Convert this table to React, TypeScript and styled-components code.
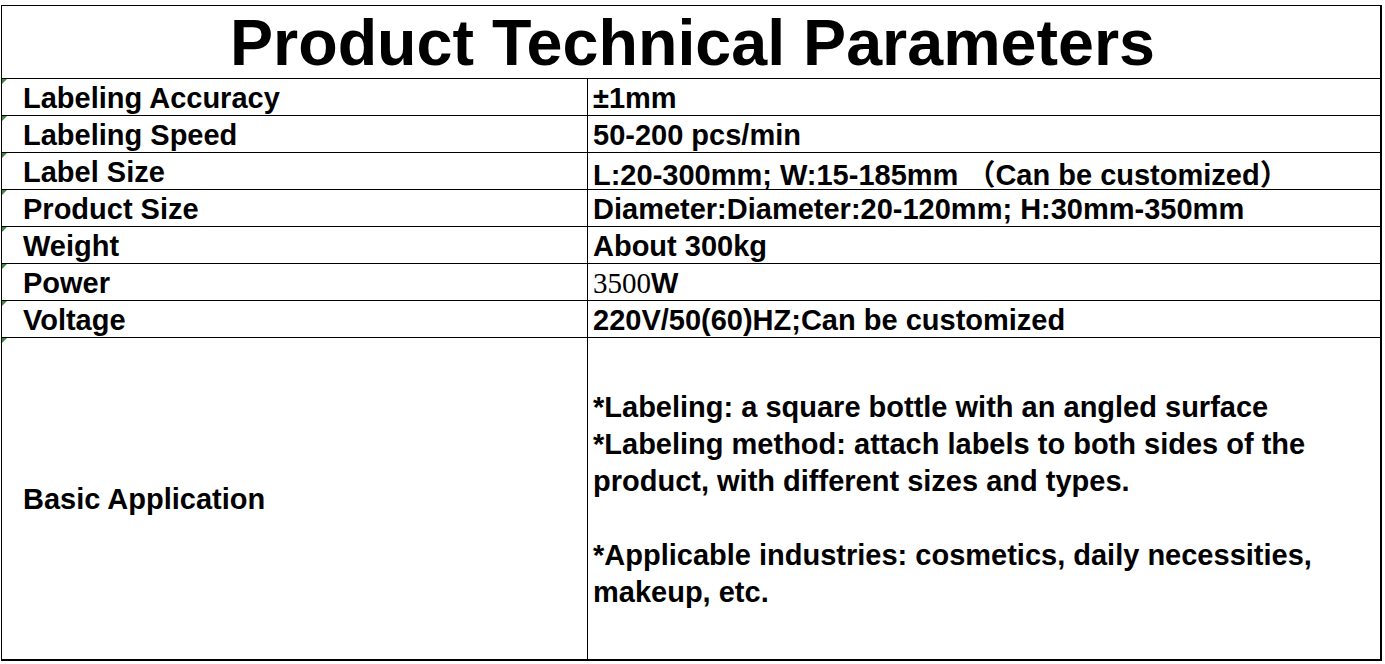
import React from 'react';
import styled, { createGlobalStyle } from 'styled-components';

const GlobalStyle = createGlobalStyle`
  html, body {
    margin: 0;
    padding: 0;
    background: #fff;
  }
  body {
    font-family: "Liberation Sans", Arial, "Noto Sans CJK SC", sans-serif;
    color: #000;
  }
`;

const Page = styled.div`
  padding: 5px 0 0 1px;
`;

const Sheet = styled.div`
  display: grid;
  grid-template-columns: 586px 792px;
  width: 1378px;
  border-top: 1px solid #000;
  border-left: 1px solid #000;
  border-right: 2px solid #000;
  border-bottom: 2px solid #000;
  font-weight: bold;
`;

const TitleCell = styled.div`
  grid-column: 1 / span 2;
  height: 73px;
  box-sizing: border-box;
  border-bottom: 1px solid #000;
  display: flex;
  align-items: center;
  justify-content: center;
  font-size: 64.6px;
  line-height: 1;
  padding: 2px 0 0 3px;
`;

const LabelCell = styled.div<{ $tall?: boolean }>`
  position: relative;
  box-sizing: border-box;
  height: ${p => (p.$tall ? '321px' : '37px')};
  border-right: 1px solid #000;
  border-bottom: ${p => (p.$tall ? 'none' : '1px solid #000')};
  padding: 2px 0 0 21px;
  display: flex;
  align-items: center;
  font-size: 29px;
  white-space: nowrap;

  &::before {
    content: '';
    position: absolute;
    top: 0;
    left: 0;
    border-top: 5px solid #3c8a3c;
    border-right: 5px solid transparent;
  }
`;

const ValueCell = styled.div<{ $tall?: boolean }>`
  box-sizing: border-box;
  height: ${p => (p.$tall ? '321px' : '37px')};
  border-bottom: ${p => (p.$tall ? 'none' : '1px solid #000')};
  padding: 2px 0 0 5px;
  display: flex;
  align-items: center;
  font-size: 29px;
  white-space: nowrap;
`;

const SerifNum = styled.span`
  font-family: "Liberation Serif", "Times New Roman", serif;
  font-weight: normal;
`;

const Paragraphs = styled.div`
  line-height: 37px;
  white-space: normal;
`;

const Line = styled.div`
  min-height: 37px;
`;

const rows: { label: string; value: React.ReactNode }[] = [
  { label: 'Labeling Accuracy', value: '±1mm' },
  { label: 'Labeling Speed', value: '50-200 pcs/min' },
  { label: 'Label Size', value: 'L:20-300mm; W:15-185mm （Can be customized）' },
  { label: 'Product Size', value: 'Diameter:Diameter:20-120mm; H:30mm-350mm' },
  { label: 'Weight', value: 'About 300kg' },
  {
    label: 'Power',
    value: (
      <>
        <SerifNum>3500</SerifNum>W
      </>
    ),
  },
  { label: 'Voltage', value: '220V/50(60)HZ;Can be customized' },
];

export default function App() {
  return (
    <Page>
      <GlobalStyle />
      <Sheet>
        <TitleCell>Product Technical Parameters</TitleCell>
        {rows.map(r => (
          <React.Fragment key={r.label}>
            <LabelCell>{r.label}</LabelCell>
            <ValueCell>{r.value}</ValueCell>
          </React.Fragment>
        ))}
        <LabelCell $tall>Basic Application</LabelCell>
        <ValueCell $tall>
          <Paragraphs>
            <Line>*Labeling: a square bottle with an angled surface</Line>
            <Line>*Labeling method: attach labels to both sides of the</Line>
            <Line>product, with different sizes and types.</Line>
            <Line />
            <Line>*Applicable industries: cosmetics, daily necessities,</Line>
            <Line>makeup, etc.</Line>
          </Paragraphs>
        </ValueCell>
      </Sheet>
    </Page>
  );
}
